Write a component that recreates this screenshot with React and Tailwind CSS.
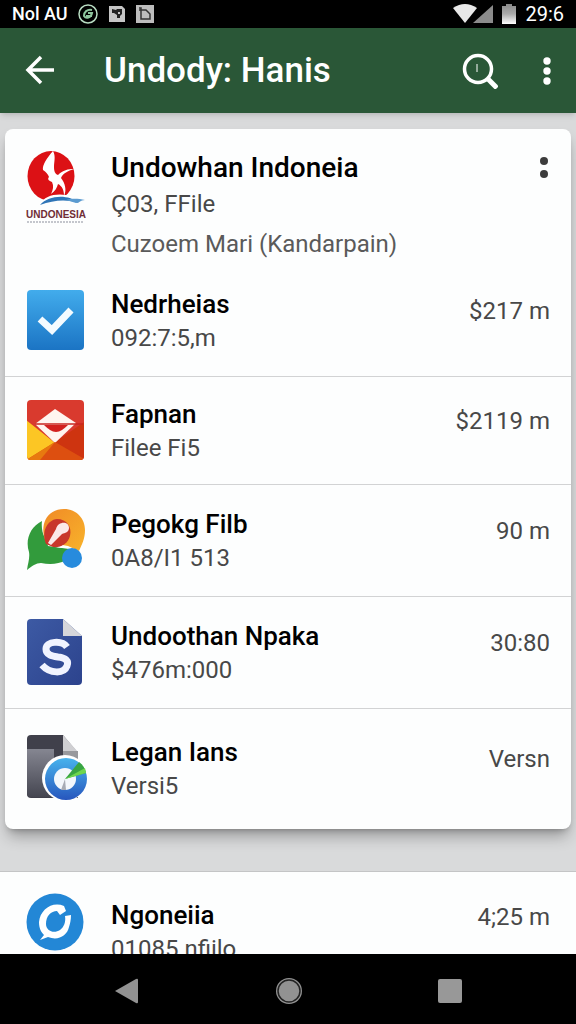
import React from 'react';

const PartnerLogo = () => (
  <svg viewBox="0 0 60 74" className="w-15 h-[74px]" aria-hidden="true">
    <ellipse cx="25" cy="25" rx="23.5" ry="25" fill="#dc1115" />
    <path
      d="M27 0C21 7 16 14 17 19c3 2 5 4 6 7c-2 2 0 4 3 5c2 4 1 8-1 12c4-3 6-6 7-10c4 2 6 6 6 12c3-6 1-13-3-18c2-5 7-7 13-9c-6 0-11 1-16 6c-3-1-4-4-4-8C28 11 30 5 27 0z"
      fill="#fff"
    />
    <path d="M14 53C20 41 44 40 56 52c-14-4-27-4-42 1z" fill="#fff" />
    <path d="M14 54C23 44 42 43 53 52c-13-4-25-3-39 2z" fill="#2f75b7" />
    <path d="M40 49c7-2 13-1 19 0c-5 0-5 3-9 3z" fill="#5b9bd0" />
    <text x="0" y="67" fontFamily="Liberation Sans" fontSize="10" fontWeight="700" fill="#702d35">
      UNDONESIA
    </text>
    <path d="M1 71h57" stroke="#8b8f9c" strokeWidth="1" strokeDasharray="2 1" />
  </svg>
);

const CheckIcon = () => (
  <svg viewBox="0 0 60 60" className="size-15" aria-hidden="true">
    <defs>
      <linearGradient id="check-bg" x1="0" y1="0" x2="0" y2="1">
        <stop offset="0" stopColor="#42acec" />
        <stop offset="1" stopColor="#1b74c4" />
      </linearGradient>
    </defs>
    <rect x="1" width="57" height="60" rx="4" fill="url(#check-bg)" />
    <path d="M14 29l12 11L45 20" fill="none" stroke="#f4fbff" strokeWidth="7" />
  </svg>
);

const EnvelopeIcon = () => (
  <svg viewBox="0 0 60 60" className="size-15" aria-hidden="true">
    <defs>
      <clipPath id="envelope-clip">
        <rect x="1" width="57" height="60" rx="4" />
      </clipPath>
    </defs>
    <g clipPath="url(#envelope-clip)">
      <rect width="60" height="60" fill="#d93a2e" />
      <path d="M60 21L29 42L40 60h20z" fill="#ce3410" />
      <path d="M0 20L29 43L4 60H0z" fill="#fcc624" />
      <path d="M29 9L50 23L29 43L9 24z" fill="#fff5ef" />
      <path d="M9 24h48" stroke="#c9251f" strokeWidth="1.5" />
      <path d="M18 25h24c-4 4-8 7-12 7s-8-3-12-7z" fill="#d2211e" />
      <path d="M0 60L29 42L60 60z" fill="#dd4f10" />
      <path d="M0 60L29 42L14 60z" fill="#e8790f" />
    </g>
  </svg>
);

const ChatIcon = () => (
  <svg viewBox="0 0 60 64" className="w-15 h-16" aria-hidden="true">
    <defs>
      <linearGradient id="chat-ring" x1="0" y1="0" x2="1" y2="1">
        <stop offset="0" stopColor="#f08a26" />
        <stop offset="1" stopColor="#f8b32b" />
      </linearGradient>
    </defs>
    <path d="M16 13C4 19-1 32 3 44c1 6-1 11-2 18c5-4 9-7 14-7c15 3 29-1 35-13l-28-4z" fill="#329b3c" />
    <path d="M16 12C14 30 24 41 40 40l12-6L40 4z" fill="#fff" />
    <path d="M20 34C13 18 20 1 38 1c13 0 21 10 21 21c0 9-3 14-6 21L42 38z" fill="url(#chat-ring)" />
    <path d="M20 36C15 24 21 12 31 11c10 0 15 8 13 17c-2 8-10 12-17 11z" fill="#c8372b" />
    <path d="M22 35l8-14c2-8 13-8 13-1c0 4-4 5-7 6L25 37z" fill="#fbe9e9" />
    <circle cx="46" cy="50" r="10" fill="#278bdd" />
  </svg>
);

const SheetIcon = () => (
  <svg viewBox="0 0 60 68" className="w-15 h-17" aria-hidden="true">
    <defs>
      <linearGradient id="sheet-bg" x1="0" y1="0" x2="1" y2="1">
        <stop offset="0" stopColor="#3d5aa4" />
        <stop offset="1" stopColor="#2c438d" />
      </linearGradient>
    </defs>
    <path d="M5 1h32l19 17v45a4 4 0 0 1-4 4H5a4 4 0 0 1-4-4V5a4 4 0 0 1 4-4z" fill="url(#sheet-bg)" />
    <path d="M37 1l19 17H37z" fill="#d5d6da" />
    <path
      d="M41 29C36 22 20 23 20 31c0 6 6 7 12 8c8 1 11 4 9 9c-3 8-17 8-25-1"
      fill="none"
      stroke="#f1f4ff"
      strokeWidth="7"
    />
  </svg>
);

const BrowserFileIcon = () => (
  <svg viewBox="0 0 62 68" className="w-[62px] h-17" aria-hidden="true">
    <defs>
      <linearGradient id="file-panel" x1="0" y1="0" x2="0" y2="1">
        <stop offset="0" stopColor="#858691" />
        <stop offset="1" stopColor="#454651" />
      </linearGradient>
      <linearGradient id="file-disc" x1="0" y1="0" x2="0" y2="1">
        <stop offset="0" stopColor="#48b3ed" />
        <stop offset="1" stopColor="#2756bd" />
      </linearGradient>
    </defs>
    <path d="M5 1h32l15 18v45H5a4 4 0 0 1-4-4V5a4 4 0 0 1 4-4z" fill="#40404b" />
    <path d="M37 1l15 17v8H37z" fill="#cfcfd2" />
    <path d="M37 17h15v12H37z" fill="#98999d" />
    <path d="M1 15h27v48H5a4 4 0 0 1-4-4z" fill="url(#file-panel)" />
    <circle cx="39" cy="44" r="23" fill="#fff" />
    <circle cx="40" cy="45" r="21" fill="url(#file-disc)" />
    <circle cx="39" cy="45" r="11" fill="#f3f7fc" />
    <path d="M39 45l-4 11h5z" fill="#a7abb5" />
    <path d="M39 45L53 28c4 3 6 6 7 11z" fill="#38a543" />
    <path d="M39 45l20-11l1 5z" fill="#6ed64e" />
  </svg>
);

const SwirlIcon = () => (
  <svg viewBox="0 0 60 60" className="size-15" aria-hidden="true">
    <circle cx="29" cy="30" r="28.5" fill="#2387d6" />
    <path
      d="M38 14C26 9 14 18 13 30c0 6 2 10 5 13l-4 5l8-3c10 4 19-1 21-10c1-3 2-7 2-12l-6 1c1 6-1 11-5 14c-6 4-14 1-14-6c0-8 5-13 11-13l3 4l6-4z"
      fill="#fff"
    />
  </svg>
);

const rows = [
  { icon: CheckIcon, title: 'Nedrheias', sub: '092:7:5,m', value: '$217 m', size: 'min-h-[112px]' },
  { icon: EnvelopeIcon, title: 'Fapnan', sub: 'Filee Fi5', value: '$2119 m', size: 'min-h-[108px]' },
  { icon: ChatIcon, title: 'Pegokg Filb', sub: '0A8/I1 513', value: '90 m', size: 'min-h-[112px]' },
  { icon: SheetIcon, title: 'Undoothan Npaka', sub: '$476m:000', value: '30:80', size: 'min-h-[112px]' },
  { icon: BrowserFileIcon, title: 'Legan Ians', sub: 'Versi5', value: 'Versn', size: 'min-h-[120px]' },
];

const Row = ({ icon: Icon, title, sub, value }) => (
  <>
    <div className="w-16 shrink-0 pb-0.5">
      <Icon />
    </div>
    <div className="flex-1 min-w-0 ml-[21px]">
      <h2 className="text-[26px] leading-[34px] font-medium text-black">{title}</h2>
      <p className="text-2xl leading-[34px] text-[#484848] whitespace-nowrap">{sub}</p>
    </div>
    <span className="pb-5 text-2xl leading-[34px] text-[#484848]">{value}</span>
  </>
);

const StatusBar = () => (
  <div className="h-7 shrink-0 flex items-center justify-between bg-black text-white px-3 text-xl leading-7">
    <div className="flex items-center gap-2.5">
      <span className="w-14 whitespace-nowrap text-lg leading-7 font-medium">Nol AU</span>
      <svg viewBox="0 0 20 20" className="size-5" fill="none" aria-hidden="true">
        <circle cx="10" cy="10" r="9" stroke="#b8dcc2" strokeWidth="1.5" />
        <path d="M14 6c-5-1-8 2-8 6c2 3 7 2 8-3h-4M8 12h6" stroke="#8fc79e" strokeWidth="2" />
      </svg>
      <svg viewBox="0 0 18 18" className="size-[18px]" aria-hidden="true">
        <path d="M1 1h13l3 3v13H1z" fill="#c6c6c6" />
        <path d="M4 4l4 1l1-1h5v5l-2 2v2H9v-3L6 8L4 8z" fill="#222" />
        <path d="M10 7h2v2h-2z" fill="#c6c6c6" />
      </svg>
      <svg viewBox="0 0 18 18" className="size-[18px]" aria-hidden="true">
        <path d="M0 0h18v18H0z" fill="#bdbdbd" />
        <path d="M3 3h2v11h9V9l-4-4H3" fill="none" stroke="#333" strokeWidth="1.5" />
      </svg>
    </div>
    <div className="flex items-center">
      <svg viewBox="0 0 64 22" className="w-16 h-[22px]" aria-hidden="true">
        <defs>
          <linearGradient id="status-fade" x1="0" y1="0" x2="0" y2="1">
            <stop offset="0" stopColor="#888" />
            <stop offset="0.5" stopColor="#aaa" />
            <stop offset="1" stopColor="#fff" />
          </linearGradient>
        </defs>
        <path d="M0 5Q12-3 24 5L12 20z" fill="#e8e8e8" />
        <path d="M40 2v18H20z" fill="#8b8b8b" />
        <path d="M49 3h4V1h6v2h4v18H49z" fill="url(#status-fade)" />
      </svg>
      <span className="ml-2">29:6</span>
    </div>
  </div>
);

const Header = () => (
  <header className="h-[85px] shrink-0 flex items-center bg-[#2a5737] text-white pl-6 pr-4 shadow-md">
    <button type="button" aria-label="Back" className="shrink-0">
      <svg viewBox="0 0 32 32" className="size-8" fill="none" stroke="currentColor" strokeWidth="3.5" aria-hidden="true">
        <path d="M30 15H5M17 2L4 15l13 13" />
      </svg>
    </button>
    <h1 className="flex-1 ml-12 text-[35px] leading-10 font-medium whitespace-nowrap">Undody: Hanis</h1>
    <button type="button" aria-label="Search" className="shrink-0 mr-9">
      <svg viewBox="0 0 36 36" className="size-9" fill="none" stroke="currentColor" aria-hidden="true">
        <circle cx="16" cy="16" r="13.5" strokeWidth="3.5" />
        <path d="M25 25l10 10" strokeWidth="5" />
        <path d="M15 11v8" strokeWidth="1" />
      </svg>
    </button>
    <button type="button" aria-label="More options" className="shrink-0">
      <svg viewBox="0 0 26 28" className="w-[26px] h-7" fill="currentColor" aria-hidden="true">
        <circle cx="13" cy="4" r="3.7" />
        <circle cx="13" cy="14" r="3.7" />
        <circle cx="13" cy="24" r="3.7" />
      </svg>
    </button>
  </header>
);

const NavBar = () => (
  <nav className="h-[70px] shrink-0 flex items-center justify-around bg-black px-[46px] pt-1">
    <button type="button" aria-label="Back">
      <svg viewBox="0 0 26 28" className="w-[26px] h-7" aria-hidden="true">
        <path d="M1 14L22 2q2-1 2 1v22q0 2-2 1z" fill="#929292" />
      </svg>
    </button>
    <button type="button" aria-label="Home">
      <svg viewBox="0 0 28 28" className="size-7" aria-hidden="true">
        <circle cx="14" cy="14" r="13" fill="#929292" />
        <circle cx="14" cy="14" r="11" fill="none" stroke="#222" strokeWidth="1.5" />
      </svg>
    </button>
    <button type="button" aria-label="Recent apps">
      <svg viewBox="0 0 24 24" className="size-6" aria-hidden="true">
        <rect width="24" height="24" rx="2" fill="#989898" />
      </svg>
    </button>
  </nav>
);

const App = () => {
  return (
    <div className="h-screen flex flex-col bg-[#d9dadb] font-['Roboto','Liberation_Sans',sans-serif]">
      <StatusBar />
      <Header />

      <main className="flex-1 min-h-0 overflow-hidden pt-4">
        {/* File list card */}
        <section className="mx-[5px] bg-[#fdfefe] rounded-lg shadow-lg shadow-black/30">
          <div className="flex items-start pl-[21px] pr-3.5 pt-[22px] min-h-[134px]">
            <div className="w-16 shrink-0">
              <PartnerLogo />
            </div>
            <div className="flex-1 ml-[21px]">
              <h2 className="text-[28px] leading-[34px] font-medium text-black">Undowhan Indoneia</h2>
              <p className="text-2xl leading-[38px] text-[#484848]">Ç03, FFile</p>
              <p className="text-2xl leading-[42px] text-[#5a5a5a]">Cuzoem Mari (Kandarpain)</p>
            </div>
            <button type="button" aria-label="Card options" className="mt-1.5">
              <svg viewBox="0 0 26 24" className="w-[26px] h-6" fill="#3c3c3c" aria-hidden="true">
                <circle cx="13" cy="4" r="4" />
                <circle cx="13" cy="17" r="4" />
              </svg>
            </button>
          </div>

          <ul className="divide-y divide-[#d2d3d4]">
            {rows.map((row) => (
              <li key={row.title} className={`flex items-center px-[21px] ${row.size}`}>
                <Row {...row} />
              </li>
            ))}
          </ul>
        </section>

        {/* Next section, cut off by the navigation bar */}
        <section className="mt-[42px] bg-[#fdfefe] border-t border-[#c4c5c6]">
          <div className="flex items-start px-[26px] pt-5">
            <div className="w-16 shrink-0">
              <SwirlIcon />
            </div>
            <div className="flex-1 min-w-0 ml-[21px] pt-1.5">
              <h2 className="text-[26px] leading-[34px] font-medium text-black">Ngoneiia</h2>
              <p className="text-2xl leading-[34px] text-[#484848] whitespace-nowrap">01085 nfiilo</p>
            </div>
            <span className="pt-2 text-2xl leading-[34px] text-[#484848]">4;25 m</span>
          </div>
        </section>
      </main>

      <NavBar />
    </div>
  );
};

export default App;
